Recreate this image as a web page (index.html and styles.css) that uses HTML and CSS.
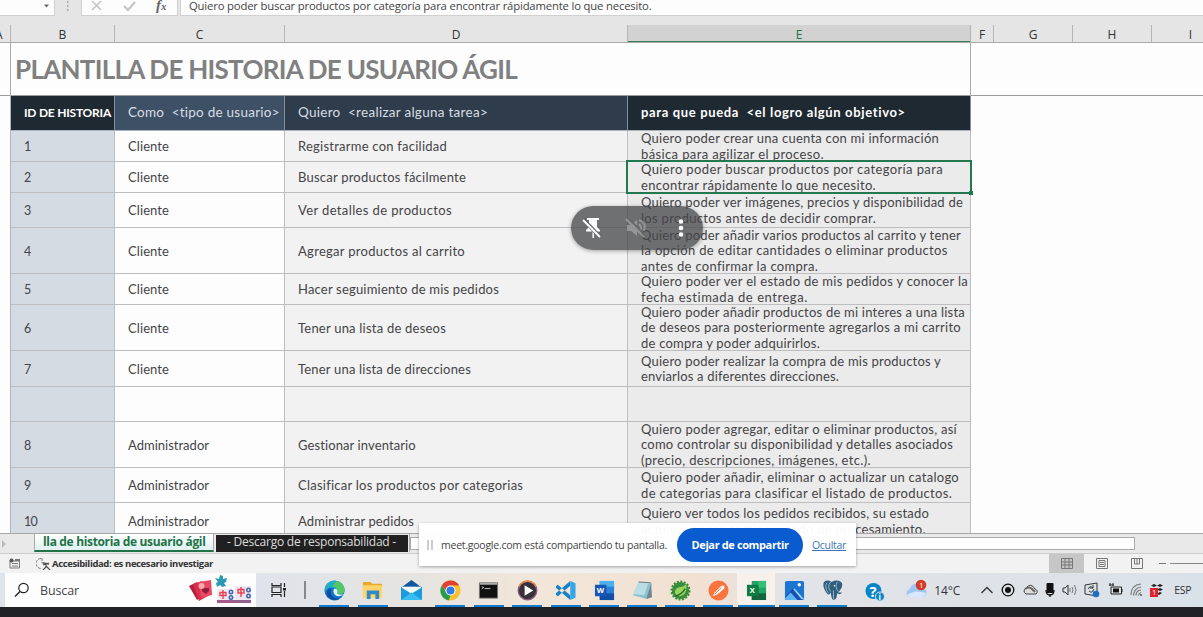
FILE: index.html
```html
<!DOCTYPE html>
<html lang="es">
<head>
<meta charset="utf-8">
<title>Plantilla de historia de usuario ágil</title>
<link rel="stylesheet" href="styles.css">
</head>
<body>
<div class="screen">
  <header class="formula">
    <div class="namebox"><svg width="6" height="4" viewBox="0 0 6 4"><path d="M0 .5h5L2.500 3.500z" fill="#666"/></svg></div>
    <svg class="grip" width="4" height="12" viewBox="0 0 4 12"><path d="M1 0h1.500v2H1zM1 4h1.500v2H1zM1 8h1.500v2H1z" fill="#aaa"/></svg>
    <div class="fx-tools">
      <svg width="12" height="12" viewBox="0 0 12 12"><path d="M1 1l9 9M10 1l-9 9" stroke="#c2c2c2" stroke-width="1.500" fill="none"/></svg>
      <svg width="14" height="12" viewBox="0 0 14 12"><path d="M1 6l4 4 7-8" stroke="#c2c2c2" stroke-width="2" fill="none"/></svg>
      <span class="fx">f<i>x</i></span>
    </div>
    <div class="formula-text"><span data-w="462.500">Quiero poder buscar productos por categoría para encontrar rápidamente lo que necesito.</span></div>
  </header>

  <div class="letters">
    <span class="la">A</span><span>B</span><span>C</span><span>D</span><span class="on">E</span><span>F</span><span>G</span><span>H</span><span class="li">I</span>
  </div>

  <main class="sheet">
    <div class="title-row"><h1><span data-w="502">PLANTILLA DE HISTORIA DE USUARIO ÁGIL</span></h1></div>
    <div class="table" id="table">
      <div class="th dark bold id"><span data-w="87">ID DE HISTORIA</span></div>
      <div class="th blue"><span data-w="152">Como&nbsp; &lt;tipo de usuario&gt;</span></div>
      <div class="th slate"><span data-w="190">Quiero&nbsp; &lt;realizar alguna tarea&gt;</span></div>
      <div class="th dark bold"><span data-w="265">para que pueda&nbsp; &lt;el logro algún objetivo&gt;</span></div>
    </div>
    <div class="meet-pill">
      <svg width="20" height="22" viewBox="0 0 20 22"><path d="M5 1h12v2h-2v7l3 3v1.500h-6V21h-1.500v-6.500H4V13l3-3V3H5z" fill="#fff"/><path d="M1 2l17 18" stroke="#66676a" stroke-width="4"/><path d="M1 3l17 17" stroke="#fff" stroke-width="2"/></svg>
      <svg class="muted" width="22" height="22" viewBox="0 0 22 22"><path d="M2 8h4l6-5v16l-6-5H2z" fill="#aaa"/><path d="M14 7q4 4 0 8M14 3q8 3 5 11" stroke="#aaa" stroke-width="2" fill="none"/><path d="M3 1l18 18" stroke="#66676a" stroke-width="2"/><path d="M1 2l18 18" stroke="#aaa" stroke-width="2"/></svg>
      <svg width="6" height="18" viewBox="0 0 6 18"><g fill="#fff"><circle cx="3" cy="2.500" r="2.300"/><circle cx="3" cy="9" r="2.300"/><circle cx="3" cy="15.500" r="2.300"/></g></svg>
    </div>
  </main>

  <div class="tabs">
    <span class="arrow"></span>
    <span class="tab active"><span data-w="162.500">lla de historia de usuario ágil</span></span>
    <span class="tab black"><span data-w="169">- Descargo de responsabilidad -</span></span>
    <span class="split"></span>
    <span class="scroll"></span>
  </div>

  <div class="status">
    <svg width="12" height="11" viewBox="0 0 12 11"><path d="M1 3h9.500v7H1zM3 5.500h6M3 8h6" fill="none" stroke="#777"/><circle cx="2.500" cy="2.500" r="2" fill="#555"/><path d="M6 1h5v2H6z" fill="#777"/></svg>
    <svg class="acc-ico" width="15" height="13" viewBox="0 0 15 13"><path d="M5 1.500A5 5 0 0 0 5 11.500M6 1v5h3" fill="none" stroke="#777" stroke-dasharray="3 1"/><path d="M7 6l6 1M10 7v3l-3 3M10 9l4 4M7 8l6-2" fill="none" stroke="#555" stroke-width="1.300"/></svg>
    <b><span data-w="161">Accesibilidad: es necesario investigar</span></b>
    <div class="views">
      <span class="view on"><svg width="12" height="11" viewBox="0 0 12 11"><path d="M.5.5h11v10H.5zM4 .5v10M8 .5v10M.5 4h11M.5 7h11" fill="none" stroke="#777"/></svg></span>
      <span class="view"><svg width="12" height="11" viewBox="0 0 12 11"><path d="M.5.5h11v10H.5zM3 2.500h6v6H3zM4 4.500h4M4 6.500h4" fill="none" stroke="#777"/></svg></span>
      <span class="view"><svg width="12" height="11" viewBox="0 0 12 11"><path d="M.5.5h11v10H.5zM3.500.5v5.500h5V.5M6 .5V6" fill="none" stroke="#777"/></svg></span>
      <i class="minus"></i><i class="zoomline"></i>
    </div>
  </div>

  <footer class="taskbar">
    <div class="search">
      <svg width="16" height="16" viewBox="0 0 16 16"><circle cx="9.500" cy="6" r="4.700" fill="none" stroke="#222" stroke-width="1.200"/><path d="M6 9.500L1 14.500" stroke="#222" stroke-width="1.400"/></svg>
      <span data-w="39">Buscar</span>
      <svg class="games" width="64" height="30" viewBox="0 0 64 30">
        <path d="M0 11l8-4 5 14-5 4z" fill="#b81f3d"/><path d="M4 9l9-3 6 15-9 5z" fill="#d9304f"/><path d="M10 7l12-2 1 15-11 3z" fill="#e84860"/><path d="M13 13h7v3l-3 3-4-3z" fill="#8e1f3e"/><circle cx="12.500" cy="11" r="3" fill="#ffa4ac"/>
        <path d="M26 3l4 1 1-4 3 1 0 3 4-1-1 4-2 1 2 3-4 1-2-2-3 2-1-4 2-1z" fill="#299ab6"/>
        <path d="M28 14h15v13H28z" fill="#f0e9f1"/><path d="M28 25h16v3H28z" fill="#a75b8d"/><path d="M46 11h16v14H46z" fill="#eee7f2"/><path d="M44 25h18v3H44z" fill="#92618e"/>
        <path d="M31 17.500h6v3h-6zM34 15v9M49 14.500h6v3.500h-6zM52 12v10" fill="none" stroke="#ed4054" stroke-width="1.400"/><g fill="none" stroke="#4367b2" stroke-width="1.600"><circle cx="42" cy="17" r="1.700"/><circle cx="42" cy="22.500" r="1.700"/><circle cx="59.500" cy="15" r="1.700"/><circle cx="59.500" cy="21" r="1.700"/></g>
      </svg>
    </div>
    <svg class="taskview" width="15" height="16" viewBox="0 0 15 16"><path d="M1 1v2.500h9V1M1 15v-2.500h9V15M1 5h9v5.500H1zM13.500 1v4M13.500 9v6" fill="none" stroke="#222" stroke-width="1.200"/><path d="M12 6h3v2.500h-3z" fill="#222"/></svg>
    <i class="sep"></i>
    <div class="apps">
      <span class="app run"><svg viewBox="0 0 22 22"><circle cx="11" cy="11" r="10.500" fill="#0d78ca"/><path d="M1 8C4-2 20-2 21.500 10c.5 5-5 6-8 4 1-1 2-5-3-6C6 7 2 9 1 13z" fill="#25aebd"/><path d="M13 1c6 1 9 6 8.500 10-.5 4-5 4-8 3 2-4-1-8-5-7z" fill="#55c765"/><path d="M8 9c-3 5 2 12 9 10-5 4-14 1-14-5 0-3 2-5 5-5z" fill="#0b4e9e"/><path d="M11 9c3 0 4 3 2.500 5 2 2 5 1.500 7.500 1-2 2-8 3-10 0-1.500-2-1.500-5 0-6z" fill="#e6f2ee"/></svg></span>
      <span class="app run"><svg viewBox="0 0 22 22"><path d="M1 2h8l2 2h10v12H1z" fill="#e7a927"/><path d="M1 5.500h20V19H1z" fill="#ffd56b"/><path d="M5 20v-9h13v9h-4v-5H9v5z" fill="#3289c7"/></svg></span>
      <span class="app"><svg viewBox="0 0 22 22"><path d="M0 8l11-8 11 8v13H0z" fill="#0f58a0"/><path d="M1 7h20v9H1z" fill="#effaff"/><path d="M0 7.500l11 7 11-7V21H0z" fill="#1c9cdd"/><path d="M0 21l11-8 11 8z" fill="#38bef3"/></svg></span>
      <span class="app run"><svg viewBox="0 0 22 22"><circle cx="11" cy="11" r="10.500" fill="#fbc02d"/><path d="M1.900 5.800A10.500 10.500 0 0 1 20.100 5.800H11L8 13z" fill="#df4133"/><path d="M1.900 5.800L8 15l3 1.500-2 5A10.500 10.500 0 0 1 1.900 5.800z" fill="#279b50"/><circle cx="11" cy="11" r="5.300" fill="#fff"/><circle cx="11" cy="11" r="4.200" fill="#2f7ce9"/></svg></span>
      <span class="app run"><svg viewBox="0 0 22 22"><path d="M1.500 3h19v16h-19z" fill="#111" stroke="#777"/><path d="M2 3h18v2H2z" fill="#aaa"/><path d="M4 7l2 1-2 1M7 9h6" stroke="#ccc" fill="none"/></svg></span>
      <span class="app run"><svg viewBox="0 0 22 22"><circle cx="11" cy="11" r="9.700" fill="#373139" stroke="#8b5a86" stroke-width="1.500"/><path d="M2 7A10 10 0 0 1 20 7" fill="none" stroke="#e18a47" stroke-width="1.500"/><path d="M8 5.500l9 5.500-9 5.500z" fill="#fff"/></svg></span>
      <span class="app run"><svg viewBox="0 0 22 22"><path d="M1 6.500L3 5l13 11v5L1 8zM1 15.500L3 17 16 6V1L1 14z" fill="#1482c8"/><path d="M16 1l5.500 2.500v15L16 21z" fill="#35a7e7"/></svg></span>
      <span class="app run"><svg viewBox="0 0 22 22"><path d="M6 1h15v20H6z" fill="#2b83d5"/><path d="M6 1h15v6H6z" fill="#4bb0ec"/><path d="M6 14h15v7H6z" fill="#104fa5"/><path d="M1 5h12v12H1z" fill="#1855b7"/><text x="3" y="14" class="app-letter">W</text></svg></span>
      <span class="app run"><svg viewBox="0 0 22 22"><path d="M7 2l14 2-5 16-15-4z" fill="#8bc1cf"/><path d="M7 2l10 1-4 13L1 15z" fill="#b9dee6"/><path d="M20 4l1 14-6 2z" fill="#70858d"/><path d="M7 2l13 1" stroke="#66757b"/></svg></span>
      <span class="app run"><svg viewBox="0 0 22 22"><circle cx="11" cy="11" r="9" fill="#398d3d" stroke="#398d3d" stroke-width="3" stroke-dasharray="2 1.500"/><path d="M17 4c1 8-1 12-7 13-4 0-6-4-4-7 3-4 8-1 11-6z" fill="#9ad45c"/><path d="M5 17c5-1 8-3 11-8" fill="none" stroke="#286c32" stroke-width="1.500"/></svg></span>
      <span class="app run"><svg viewBox="0 0 22 22"><circle cx="11" cy="11" r="10.500" fill="#fa743e"/><path d="M5 17l2-4 7-7 3 0 0 3-7 6z" fill="#fff"/><path d="M7 15l7-7" stroke="#fa743e"/></svg></span>
      <span class="app run current"><svg viewBox="0 0 22 22"><path d="M6 1h15v20H6z" fill="#21a366"/><path d="M13 1h8v7h-8z" fill="#35bd79"/><path d="M6 8h7v13H6zM13 14h8v7h-8z" fill="#15633c"/><path d="M1 5h12v12H1z" fill="#107c41"/><text x="4" y="14" class="app-letter">X</text></svg></span>
      <span class="app run"><svg viewBox="0 0 22 22"><rect x="1" y="1" width="20" height="20" rx="2" fill="#1e74d2"/><path d="M6 13l5-4 10 11H9z" fill="#8bd4fa"/><path d="M1 18L9 9l10 12H2z" fill="#194eb0"/><path d="M1 19l6-6 7 8H2z" fill="#5db5f2"/><circle cx="16" cy="5" r="1.800" fill="#fff"/></svg></span>
      <span class="app run"><svg viewBox="0 0 22 22"><path d="M2 2q4-3 8 0 5-3 10 0c3 3 0 8-3 11h4q-2 3-5 1l-1 5q-4 4-5-1l-1-5q-2 4-4 1Q0 7 2 2z" fill="#315f80"/><path d="M9 2q-4 5 0 10M16 2q-3 5 1 10M5 3q-3 5 2 11M12 11v9" fill="none" stroke="#b8cad6" stroke-width=".8"/><circle cx="13" cy="6" r=".8" fill="#fff"/></svg></span>
    </div>
    <svg class="help" width="20" height="20" viewBox="0 0 20 20"><circle cx="8.500" cy="9" r="8" fill="#0b84c6"/><text x="4.500" y="14.500" class="question">?</text><circle cx="15" cy="14.500" r="4.500" fill="#0b84c6" stroke="#dfe5ea"/><text x="13.500" y="18" class="info">i</text></svg>
    <div class="weather"><svg width="24" height="22" viewBox="0 0 24 22"><path d="M3 17q-4-4 2-7 2-7 9-4 3 1 3 4 6 0 4 6-1 2-4 2H5z" fill="#9ec6f3"/><path d="M2 16q8-6 19-2-1 4-5 4H5z" fill="#d8e9ff"/><circle cx="16" cy="6" r="5.300" fill="#d43c28"/><text x="14" y="9" class="badge-num">1</text></svg><span data-w="26">14°C</span></div>
    <div class="tray">
      <svg width="14" height="16" viewBox="0 0 14 16"><path d="M1.500 11L7 5.500l5.500 5.500" fill="none" stroke="#333" stroke-width="1.300"/></svg>
      <svg width="14" height="16" viewBox="0 0 14 16"><circle cx="7" cy="8" r="5.800" fill="none" stroke="#111" stroke-width="1.300"/><circle cx="7" cy="8" r="3" fill="#111"/></svg>
      <svg width="15" height="16" viewBox="0 0 15 16"><path d="M3 12Q-1 9 3 6q5-6 9 1 4 2 1 5z" fill="#ddd" stroke="#444"/><path d="M2 7q4-3 7 0l3 3" stroke="#666" stroke-width="2" fill="none"/></svg>
      <svg width="10" height="16" viewBox="0 0 10 16"><rect x="1.500" y="1" width="7" height="10" rx="1" fill="#111"/><path d="M1 8q0 5 4 5t4-5M5 12v3" fill="none" stroke="#111" stroke-width="1.300"/></svg>
      <svg width="15" height="16" viewBox="0 0 15 16"><path d="M1 6h2l3-3v10l-3-3H1z" fill="none" stroke="#333"/><path d="M8 6v4M10 5q2 3 0 6M12.500 3q3 5 0 10" fill="none" stroke="#777"/></svg>
      <svg width="16" height="16" viewBox="0 0 16 16"><path d="M1 3l12-2v13l-12-2z" fill="none" stroke="#333"/><path d="M4 7q2-4 5-1M9 3v3H6M10 7q-2 5-5 2" stroke="#333" fill="none"/><circle cx="12" cy="12" r="3.300" fill="#1c70bf"/></svg>
      <svg width="15" height="16" viewBox="0 0 15 16"><path d="M3 5h10.500v7H3zM14 7v3M1 3h5M2 1v3M5 1v3" stroke="#222" fill="none"/><path d="M5 6.500h6v4H5z" fill="#111"/></svg>
      <svg width="13" height="16" viewBox="0 0 13 16"><g fill="none" stroke="#777" stroke-width="1.200"><path d="M1 13Q1 3 11 2M3.500 13.500Q4 6 11 5M6 13.500q0-5 5-5.500M8.500 13.500q0-2 2.500-3"/></g><circle cx="11" cy="13" r="1" fill="#555"/></svg>
      <svg width="14" height="16" viewBox="0 0 14 16"><path d="M1 3.500L4 2l3 1.500L4 5zM7 3.500L10 2l3 1.500L10 5zM7 7.500L10 6l3 1.500L10 9zM7 11.500l3-1.500 2 1-3 2z" fill="#222"/><path d="M0 6h8v9H0z" fill="#e3202c"/><text x="2" y="13" class="badge-num">1</text></svg>
    </div>
    <span class="lang"><span data-w="17">ESP</span></span>
  </footer>
  <div class="bottom"></div>

  <aside class="share">
    <i class="bars"></i>
    <span class="share-msg"><span data-w="226">meet.google.com está compartiendo tu pantalla.</span></span>
    <button><span data-w="97">Dejar de compartir</span></button>
    <a><span data-w="34">Ocultar</span></a>
  </aside>
</div>
<script src="app.js"></script>
</body>
</html>
```
FILE: styles.css
```css
* { box-sizing: border-box; }
body { margin: 0; overflow: hidden; font-family: "Open Sans", "Noto Sans", sans-serif; }
svg { display: block; flex: none; }
[data-w] { white-space: pre; display: inline-block; }
.screen { width: 1203px; height: 617px; display: flex; flex-direction: column; position: relative; background: #fdfdfe; }

.formula { height: 16px; flex: none; display: flex; background: #e5e5e5; }
.namebox { width: 55px; background: #fdfdfd; border: solid #d0d0d0; border-width: 0 1px 1px 0; padding: 4px 0 0 44px; }
.grip { margin: 1px 11px 0; width: 4px; }
.fx-tools { width: 97px; margin-right: 2px; background: #fdfdfd; border: solid #d0d0d0; border-width: 0 1px 1px; display: flex; padding-left: 9px; gap: 20px; overflow: hidden; }
.fx { font: italic bold 15px/11px "Liberation Serif", serif; color: #666; margin-left: -1px; }
.fx i { font-size: 11px; }
.formula-text { flex: 1; background: #fdfdfe; border-left: 1px solid #d0d0d0; border-bottom: 1px solid #d0d0d0; padding-left: 8px; font-size: 11.300px; line-height: 12px; color: #444; }

.letters { height: 27px; flex: none; padding-top: 9px; background: #e5e5e5; border-bottom: 1px solid #a9a9a9; display: grid; grid-template-columns: 11px 104px 170px 343px 343px 23px 79px 79px 51px; overflow: hidden; }
.letters span { height: 17px; border-right: 1px solid #b5b5b5; text-align: center; font-size: 12px; line-height: 19px; color: #333; }
.letters .la { text-align: left; text-indent: -5px; }
.letters .on { background: #d2d2d2; color: #217346; box-shadow: inset 0 -1px #3a7b5c, 0 1px #3a7b5c; }
.letters .li { padding-left: 26px; border: 0; }

.sheet { height: 490px; flex: none; position: relative; overflow: hidden; background: #fdfdfe; }
.title-row { height: 53px; border-bottom: 1px solid #9b9ba0; display: grid; grid-template-columns: 10px 961px 1fr; }
.title-row h1 { grid-column: 2; margin: 0; border: solid #aaa; border-width: 0 1px; padding-left: 4px; font: bold 26px/53px Lato, sans-serif; color: #808080; }
.table { width: 961px; margin-left: 10px; border-left: 1px solid #aeb4ba; display: grid; grid-template-columns: 104px 170px 343px 343px; font-family: Lato, sans-serif; }
.th { height: 35px; padding: 0 0 2px 13px; display: flex; align-items: center; font-size: 13.500px; color: #d7dee5; border-right: 1px solid #8090a0; border-bottom: 1px solid #aab4c0; }
.dark { background: #1f2932; }
.blue { background: #3e5066; }
.slate { background: #2e3c4b; }
.th.bold { font-weight: bold; color: #fff; font-size: 13px; }
.th.bold.id { font-size: 12px; }
.td { display: flex; flex-direction: column; justify-content: center; align-items: flex-start; padding: 2px 0 0 13px; font-size: 13px; line-height: 15.500px; color: #444446; border: solid #bebec0; border-width: 0 1px 1px 0; position: relative; }
.td.c0 { background: #d4dbe3; font-size: 12.500px; }
.td.c1 { background: #fdfdfe; }
.td.c2 { background: #f2f2f2; }
.td.c3 { background: #ebebeb; padding-top: 1px; }
.td.selected::before { content: ""; position: absolute; inset: -2px -2px -2px -2px; border: 2px solid #23784f; z-index: 1; }
.td.selected::after { content: ""; position: absolute; right: -3px; bottom: -3px; width: 4px; height: 4px; background: #23784f; z-index: 1; }
.meet-pill { position: absolute; left: 571px; top: 163px; width: 132px; height: 44px; border-radius: 22px; background: rgba(70, 71, 74, .76); box-shadow: 0 1px 4px #0005; display: flex; align-items: center; padding-left: 11px; z-index: 2; }
.meet-pill .muted { margin: 0 31px 0 23px; opacity: .65; }

.tabs { height: 21px; flex: none; display: flex; background: #e9e9ea; border-top: 1px solid #a7a7a9; border-bottom: 1px solid #ccc; }
.arrow { border: solid transparent; border-width: 4px 0 4px 4px; border-left-color: #bbb; height: 0; margin: 6px 28px 0 2px; width: 4px; }
.tab { height: 18px; line-height: 15px; font-size: 12px; }
.active { width: 180px; margin-right: 2px; padding-left: 8px; color: #217346; font-weight: bold; background: linear-gradient(#fff, #e0f0f1); border: solid #aaa; border-width: 0 1px; border-bottom: 2px solid #217346; }
.black { width: 192px; padding-left: 11px; color: #ddd; background: #202020; margin-top: 1px; height: 17px; line-height: 13px; }
.split { width: 2px; height: 18px; border-right: 1px solid #aaa; }
.scroll { width: 725px; height: 13px; margin-top: 3px; background: #fff; border: 1px solid #aaa; }

.status { height: 19px; flex: none; background: #f2f2f2; display: flex; align-items: center; padding-left: 9px; font-size: 9.500px; color: #333; }
.acc-ico { margin: 0 1px 0 15px; }
.views { margin-left: auto; width: 154px; height: 19px; display: flex; align-items: center; }
.view { width: 35px; height: 19px; display: flex; align-items: center; justify-content: center; }
.view.on { background: #c6c6c6; }
.minus { width: 7px; height: 1px; background: #777; margin: 0 4px 0 5px; }
.zoomline { flex: 1; height: 1px; background: #888; }

.taskbar { height: 34px; flex: none; display: flex; align-items: center; background: linear-gradient(90deg, #dfe3ec 20%, #e6e4e0 35%, #f1e6d9 44%, #f2e1d2 58%, #e2e3e7 66%, #dae2e9); overflow: hidden; }
.search { width: 251px; height: 34px; margin-left: 5px; background: #fdfdfe; display: flex; align-items: center; padding-left: 9px; gap: 10px; font-size: 12.500px; color: #444; }
.games { margin-left: 100px; }
.taskview { margin: 0 19px 0 15px; }
.sep { width: 2px; height: 18px; background: #888; margin: 0 9px 0 -1px; }
.apps { display: flex; height: 34px; }
.app { width: 38px; height: 34px; display: flex; align-items: center; justify-content: center; position: relative; }
.app:nth-child(-n+7) { width: 38.600px; }
.app svg { width: 21px; height: 21px; }
.app.run { background: linear-gradient(#0f7bd0, #0f7bd0) center bottom / 30px 2px no-repeat; }
.app.run.current { background: linear-gradient(#0f7bd0, #0f7bd0) center bottom / 37px 2px no-repeat, #f8f1eb; }
.app-letter { font: bold 8px "Open Sans", sans-serif; fill: #fff; }
.question { font: bold 15px "Open Sans", sans-serif; fill: #fff; }
.info { font: bold 8px "Open Sans", sans-serif; fill: #fff; }
.badge-num { font: 8px "Open Sans", sans-serif; fill: #fff; }
.help { margin: 4px 0 0 14px; }
.weather { display: flex; align-items: center; gap: 5px; margin-left: 20px; font-size: 12px; color: #333; }
.tray { display: flex; justify-content: space-between; width: 184px; margin-left: 20px; }
.lang { margin-left: 10px; font-size: 10.500px; color: #333; }
.bottom { height: 10px; flex: none; background: #202125; }

.share { position: absolute; left: 419px; top: 523px; width: 437px; height: 43px; background: rgba(255, 255, 255, .97); box-shadow: 0 1px 3px #0005; display: flex; align-items: center; padding-left: 8px; font-size: 10.500px; color: #444; z-index: 3; }
.bars { width: 6px; height: 10px; border: solid #ccc; border-width: 0 2px; margin-right: 8px; }
.share-msg { width: 236px; }
.share button { width: 126px; height: 34px; padding: 0; border: 0; border-radius: 17px; background: #0b5bd0; color: #fff; font: bold 11px "Open Sans", sans-serif; }
.share a { margin-left: 9px; color: #3d76b5; }
.share a span { text-decoration: underline; }
```
FILE: app.js
```js
// Each story: row height, id, role, task, goal lines; texts are [text, width].
const stories = [
  [31, '1', ['Cliente', 41], ['Registrarme con facilidad', 149], [['Quiero poder crear una cuenta con mi información', 298], ['básica para agilizar el proceso.', 183]]],
  [31, '2', ['Cliente', 41], ['Buscar productos fácilmente', 168], [['Quiero poder buscar productos por categoría para', 302], ['encontrar rápidamente lo que necesito.', 235]]],
  [35, '3', ['Cliente', 41], ['Ver detalles de productos', 154], [['Quiero poder ver imágenes, precios y disponibilidad de', 322], ['los productos antes de decidir comprar.', 235]]],
  [46, '4', ['Cliente', 41], ['Agregar productos al carrito', 167], [['Quiero poder añadir varios productos al carrito y tener', 320], ['la opción de editar cantidades o eliminar productos', 307], ['antes de confirmar la compra.', 177]]],
  [31, '5', ['Cliente', 41], ['Hacer seguimiento de mis pedidos', 201], [['Quiero poder ver el estado de mis pedidos y conocer la', 327], ['fecha estimada de entrega.', 167]]],
  [46, '6', ['Cliente', 41], ['Tener una lista de deseos', 148], [['Quiero poder añadir productos de mi interes a una lista', 324], ['de deseos para posteriormente agregarlos a mi carrito', 320], ['de compra y poder adquirirlos.', 179]]],
  [36, '7', ['Cliente', 41], ['Tener una lista de direcciones', 173], [['Quiero poder realizar la compra de mis productos y', 300], ['enviarlos a diferentes direcciones.', 198]]],
  [35, '', null, null, []],
  [46, '8', ['Administrador', 81], ['Gestionar inventario', 118], [['Quiero poder agregar, editar o eliminar productos, así', 316], ['como controlar su disponibilidad y detalles asociados', 312], ['(precio, descripciones, imágenes, etc.).', 230]]],
  [35, '9', ['Administrador', 81], ['Clasificar los productos por categorias', 225], [['Quiero poder añadir, eliminar o actualizar un catalogo', 318], ['de categorias para clasificar el listado de productos.', 311]]],
  [37, '10', ['Administrador', 81], ['Administrar pedidos', 116], [['Quiero ver todos los pedidos recibidos, su estado', 288], ['actual y poder gestionar todo de procesamiento.', 285]]]
];

const table = document.getElementById('table');
for (const [height, id, role, task, goal] of stories) {
  const cells = [id ? [[id, id.length > 1 ? 13 : 7]] : [], role ? [role] : [], task ? [task] : [], goal];
  cells.forEach((lines, col) => {
    const cell = document.createElement('div');
    cell.className = 'td c' + col + (id === '2' && col === 3 ? ' selected' : '');
    cell.style.height = height + 'px';
    for (const [text, width] of lines) {
      const line = document.createElement('span');
      line.textContent = text;
      line.dataset.w = width;
      cell.append(line);
    }
    table.append(cell);
  });
}

// Track each text so that it fills its set width.
for (const el of document.querySelectorAll('[data-w]')) {
  const gap = Number(el.dataset.w) - el.getBoundingClientRect().width;
  el.style.letterSpacing = gap / el.textContent.length + 'px';
}
```
